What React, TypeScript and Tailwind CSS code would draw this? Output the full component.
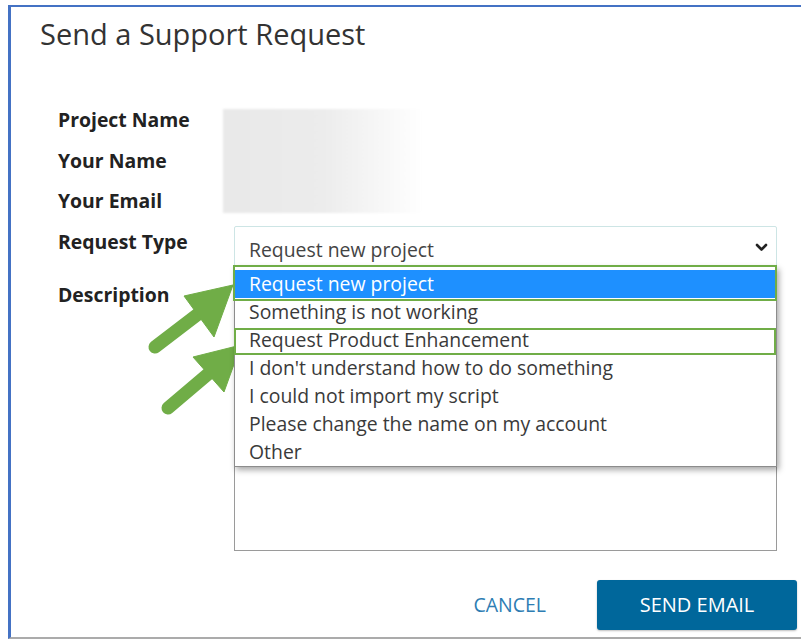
import React from 'react';

const options = [
  'Request new project',
  'Something is not working',
  'Request Product Enhancement',
  "I don't understand how to do something",
  'I could not import my script',
  'Please change the name on my account',
  'Other',
];

function Chevron() {
  return (
    <svg width="13" height="9" viewBox="0 0 13 9" fill="none">
      <path d="M2 2l4.5 4.5L11 2" stroke="#222" strokeWidth="2.6" strokeLinecap="round" strokeLinejoin="round" />
    </svg>
  );
}

// green call-out arrows drawn over the form
function Arrows() {
  return (
    <svg className="absolute inset-0 pointer-events-none" width="801" height="639" viewBox="0 0 801 639">
      <g fill="#70ad47" stroke="#70ad47">
        <line x1="155" y1="347" x2="206" y2="308" strokeWidth="13" strokeLinecap="round" />
        <polygon points="233,285 184,296 214,337" strokeWidth="1" strokeLinejoin="round" />
        <line x1="168" y1="408" x2="214" y2="369" strokeWidth="13" strokeLinecap="round" />
        <polygon points="241,345 193,357 224,392" strokeWidth="1" strokeLinejoin="round" />
      </g>
    </svg>
  );
}

export default function App() {
  return (
    <div className="relative w-[801px] h-[639px] bg-white overflow-hidden font-['Open_Sans',sans-serif]">
      <div className="ml-[8px] mt-[5px] h-[634px] border-t-2 border-l-[3px] border-b-2 border-[#4472c4] border-b-[#ababab]">
        {/* title */}
        <h1 className="pl-[29px] pt-[9px] text-[29px] leading-[36px] text-[#333]">Send a Support Request</h1>

        {/* form */}
        <div className="mt-[48px] pl-[47px] grid grid-cols-[165px_1fr] text-[19.4px]">
          <div className="h-[40.5px] flex items-center font-bold text-[#222] leading-[24px]">Project Name</div>
          <div className="row-span-3">
            <div className="mt-[9px] h-[104px] w-[200px] bg-gradient-to-r from-[#e9e9e9] via-[#ececec] to-white blur-[1px]" />
          </div>
          <div className="h-[40.5px] flex items-center font-bold text-[#222] leading-[24px]">Your Name</div>
          <div className="h-[40.5px] flex items-center font-bold text-[#222] leading-[24px]">Your Email</div>

          <div className="pt-[8px] font-bold text-[#222] leading-[24px]">Request Type</div>
          <div className="pl-[11px] pt-[4.5px]">
            <div className="relative w-[543px] h-[42px] border border-[#cde5e5] rounded-[2px] flex items-center justify-between pl-[14px] pr-[8px] text-[#444] bg-white">
              <span className="pt-[6px]">Request new project</span>
              <Chevron />

              {/* open option list */}
              <div className="absolute left-[-1px] top-[39px] z-10 w-[543px] bg-white border border-[#8c8c8c] pt-[3px] shadow-[2px_3px_6px_rgba(0,0,0,0.35)]">
                {options.map((o, i) => (
                  <div
                    key={o}
                    className={
                      i === 0
                        ? 'h-[28px] leading-[28px] pl-[14px] bg-[#1e90ff] text-white'
                        : 'h-[28px] leading-[28px] pl-[14px] text-[#3a3a3a]'
                    }
                  >
                    {o}
                  </div>
                ))}
                <span className="absolute left-[-2px] right-[-1px] top-[-2px] h-[36px] border-2 border-[#70ad47]" />
                <span className="absolute left-[-1px] right-[0px] top-[61px] h-[27px] border-2 border-[#70ad47]" />
              </div>
            </div>
          </div>

          <div className="mt-[8px] pt-[7px] font-bold text-[#222] leading-[24px]">Description</div>
          <div className="mt-[8px] pl-[11px]">
            <div className="w-[543px] h-[275px] border border-[#9a9a9a]" />
          </div>
        </div>

        {/* actions */}
        <div className="mt-[29px] pr-[4px] flex justify-end items-center gap-[51px]">
          <button className="text-[19.5px] text-[#2d7db3] leading-[24px]">CANCEL</button>
          <button className="w-[200px] h-[50px] rounded-[3px] bg-[#00679b] text-white text-[20px] shadow-[0_1px_2px_rgba(0,0,0,0.25)]">
            SEND EMAIL
          </button>
        </div>
      </div>

      <Arrows />
    </div>
  );
}
